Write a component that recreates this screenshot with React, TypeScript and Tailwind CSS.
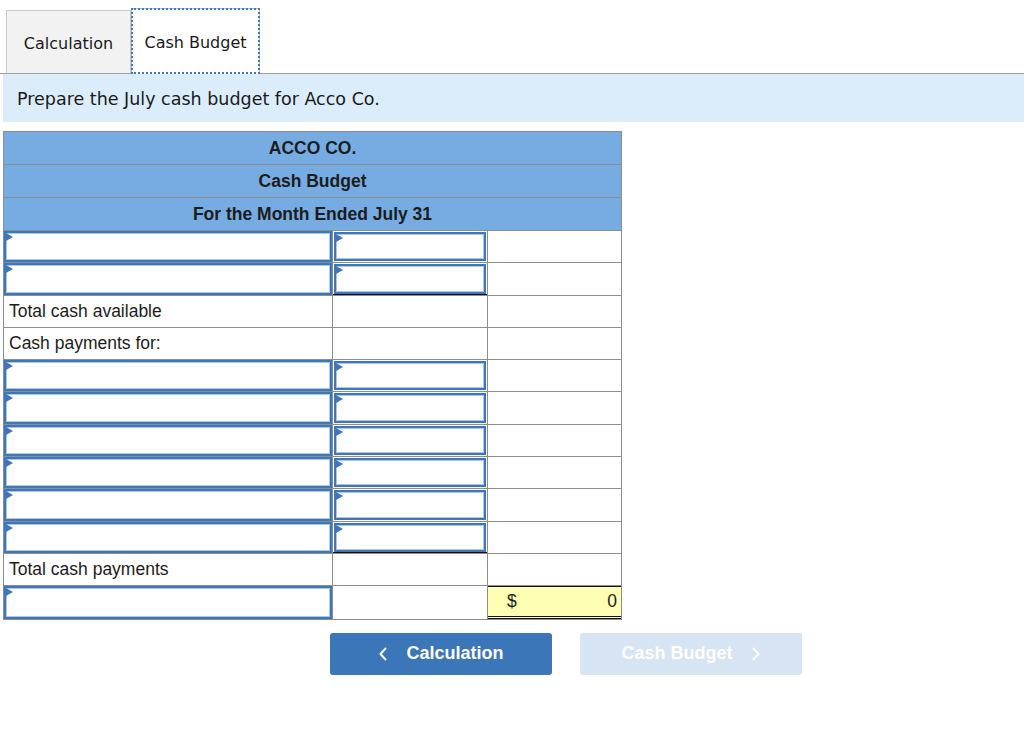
import React from 'react';

type Cell = 'input' | 'blank' | { text: string };

interface Row {
  c1: Cell;
  c2: Cell;
  c3: Cell | 'total';
  c2Rule?: boolean;
}

const rows: Row[] = [
  { c1: 'input', c2: 'input', c3: 'blank' },
  { c1: 'input', c2: 'input', c3: 'blank', c2Rule: true },
  { c1: { text: 'Total cash available' }, c2: 'blank', c3: 'blank' },
  { c1: { text: 'Cash payments for:' }, c2: 'blank', c3: 'blank' },
  { c1: 'input', c2: 'input', c3: 'blank' },
  { c1: 'input', c2: 'input', c3: 'blank' },
  { c1: 'input', c2: 'input', c3: 'blank' },
  { c1: 'input', c2: 'input', c3: 'blank' },
  { c1: 'input', c2: 'input', c3: 'blank' },
  { c1: 'input', c2: 'input', c3: 'blank', c2Rule: true },
  { c1: { text: 'Total cash payments' }, c2: 'blank', c3: 'blank' },
  { c1: 'input', c2: 'blank', c3: 'total' },
];

function InputBox({ inset }: { inset?: boolean }) {
  return (
    <div className={`relative h-full ${inset ? 'p-px' : ''}`}>
      <div className="relative h-full border-2 border-[#3d76b9] shadow-[inset_0_0_0_1px_#a9c8ec] bg-white">
        <span className="absolute left-0 top-0 w-0 h-0 border-y-[4.5px] border-y-transparent border-l-[7px] border-l-[#3d76b9]" />
      </div>
    </div>
  );
}

function renderCell(cell: Cell, inset?: boolean) {
  if (cell === 'input') return <InputBox inset={inset} />;
  if (cell === 'blank') return null;
  return <div className="h-full flex items-center pl-[5px] text-[17.5px] text-[#1c1c1c]">{cell.text}</div>;
}

export default function App() {
  return (
    <div className="w-[1024px] h-[732px] bg-white font-['Liberation_Sans',Arial,sans-serif]">
      {/* Tabs */}
      <div className="flex items-end pl-[6px] pt-[8px] border-b border-[#a0a0a0] font-['DejaVu_Sans',Verdana,sans-serif] text-[16px] text-[#1a1a1a]">
        <div className="w-[125px] h-[63px] pt-[3px] bg-[#f2f2f2] border border-b-0 border-[#c9c9c9] flex items-center justify-center">
          Calculation
        </div>
        <div className="w-[129px] h-[66px] -mb-px pt-[2px] bg-white border border-b-0 border-[#bcbcbc] outline-2 outline-dotted outline-[#3b7ac4] -outline-offset-2 flex items-center justify-center">
          Cash Budget
        </div>
      </div>

      {/* Instruction */}
      <div className="ml-[3px] h-[48px] pt-[3px] bg-[#dbedfb] flex items-center pl-[14px] font-['DejaVu_Sans',Verdana,sans-serif] text-[17.5px] text-[#1a1a1a]">
        Prepare the July cash budget for Acco Co.
      </div>

      {/* Table */}
      <div className="ml-[3px] mt-[9px] w-[619px] border border-[#8d8d8d]">
        {['ACCO CO.', 'Cash Budget', 'For the Month Ended July 31'].map((h) => (
          <div
            key={h}
            className="h-[33px] bg-[#76ace2] border-b border-[#8d8d8d] flex items-center justify-center font-bold text-[17.5px] text-[#1c1c1c]"
          >
            {h}
          </div>
        ))}
        {rows.map((r, i) => (
          <div
            key={i}
            className={`flex h-[32.3px] ${i < rows.length - 1 ? 'border-b border-[#8d8d8d]' : ''}`}
          >
            <div className="w-[329px] border-r border-[#8d8d8d]">{renderCell(r.c1)}</div>
            <div
              className={`w-[155px] border-r border-[#8d8d8d] ${r.c2Rule ? 'shadow-[inset_0_-1px_0_#111]' : ''}`}
            >
              {renderCell(r.c2, true)}
            </div>
            <div className="flex-1">
              {r.c3 === 'total' ? (
                <div className="h-full bg-[#ffffb3] border-t border-[#111] border-b-[3px] border-b-[#111] border-double flex items-center justify-between pl-[19px] pr-[4px] text-[17.5px] text-[#1c1c1c]">
                  <span>$</span>
                  <span>0</span>
                </div>
              ) : (
                renderCell(r.c3 as Cell)
              )}
            </div>
          </div>
        ))}
      </div>

      {/* Nav buttons */}
      <div className="flex gap-[28px] ml-[330px] mt-[13px]">
        <button className="w-[222px] h-[42px] rounded-[3px] bg-[#3a76b8] text-white font-bold text-[18px] flex items-center justify-center gap-[18px]">
          <svg width="10" height="14" viewBox="0 0 10 14" fill="none">
            <polyline points="7.5,1.5 2.5,7 7.5,12.5" stroke="white" strokeWidth="2" strokeLinecap="round" strokeLinejoin="round" />
          </svg>
          <span>Calculation</span>
        </button>
        <button className="w-[222px] h-[42px] rounded-[3px] bg-[#d6e4f3] text-white font-bold text-[18px] flex items-center justify-center gap-[18px]">
          <span>Cash Budget</span>
          <svg width="10" height="14" viewBox="0 0 10 14" fill="none">
            <polyline points="2.5,1.5 7.5,7 2.5,12.5" stroke="white" strokeWidth="2" strokeLinecap="round" strokeLinejoin="round" />
          </svg>
        </button>
      </div>
    </div>
  );
}
